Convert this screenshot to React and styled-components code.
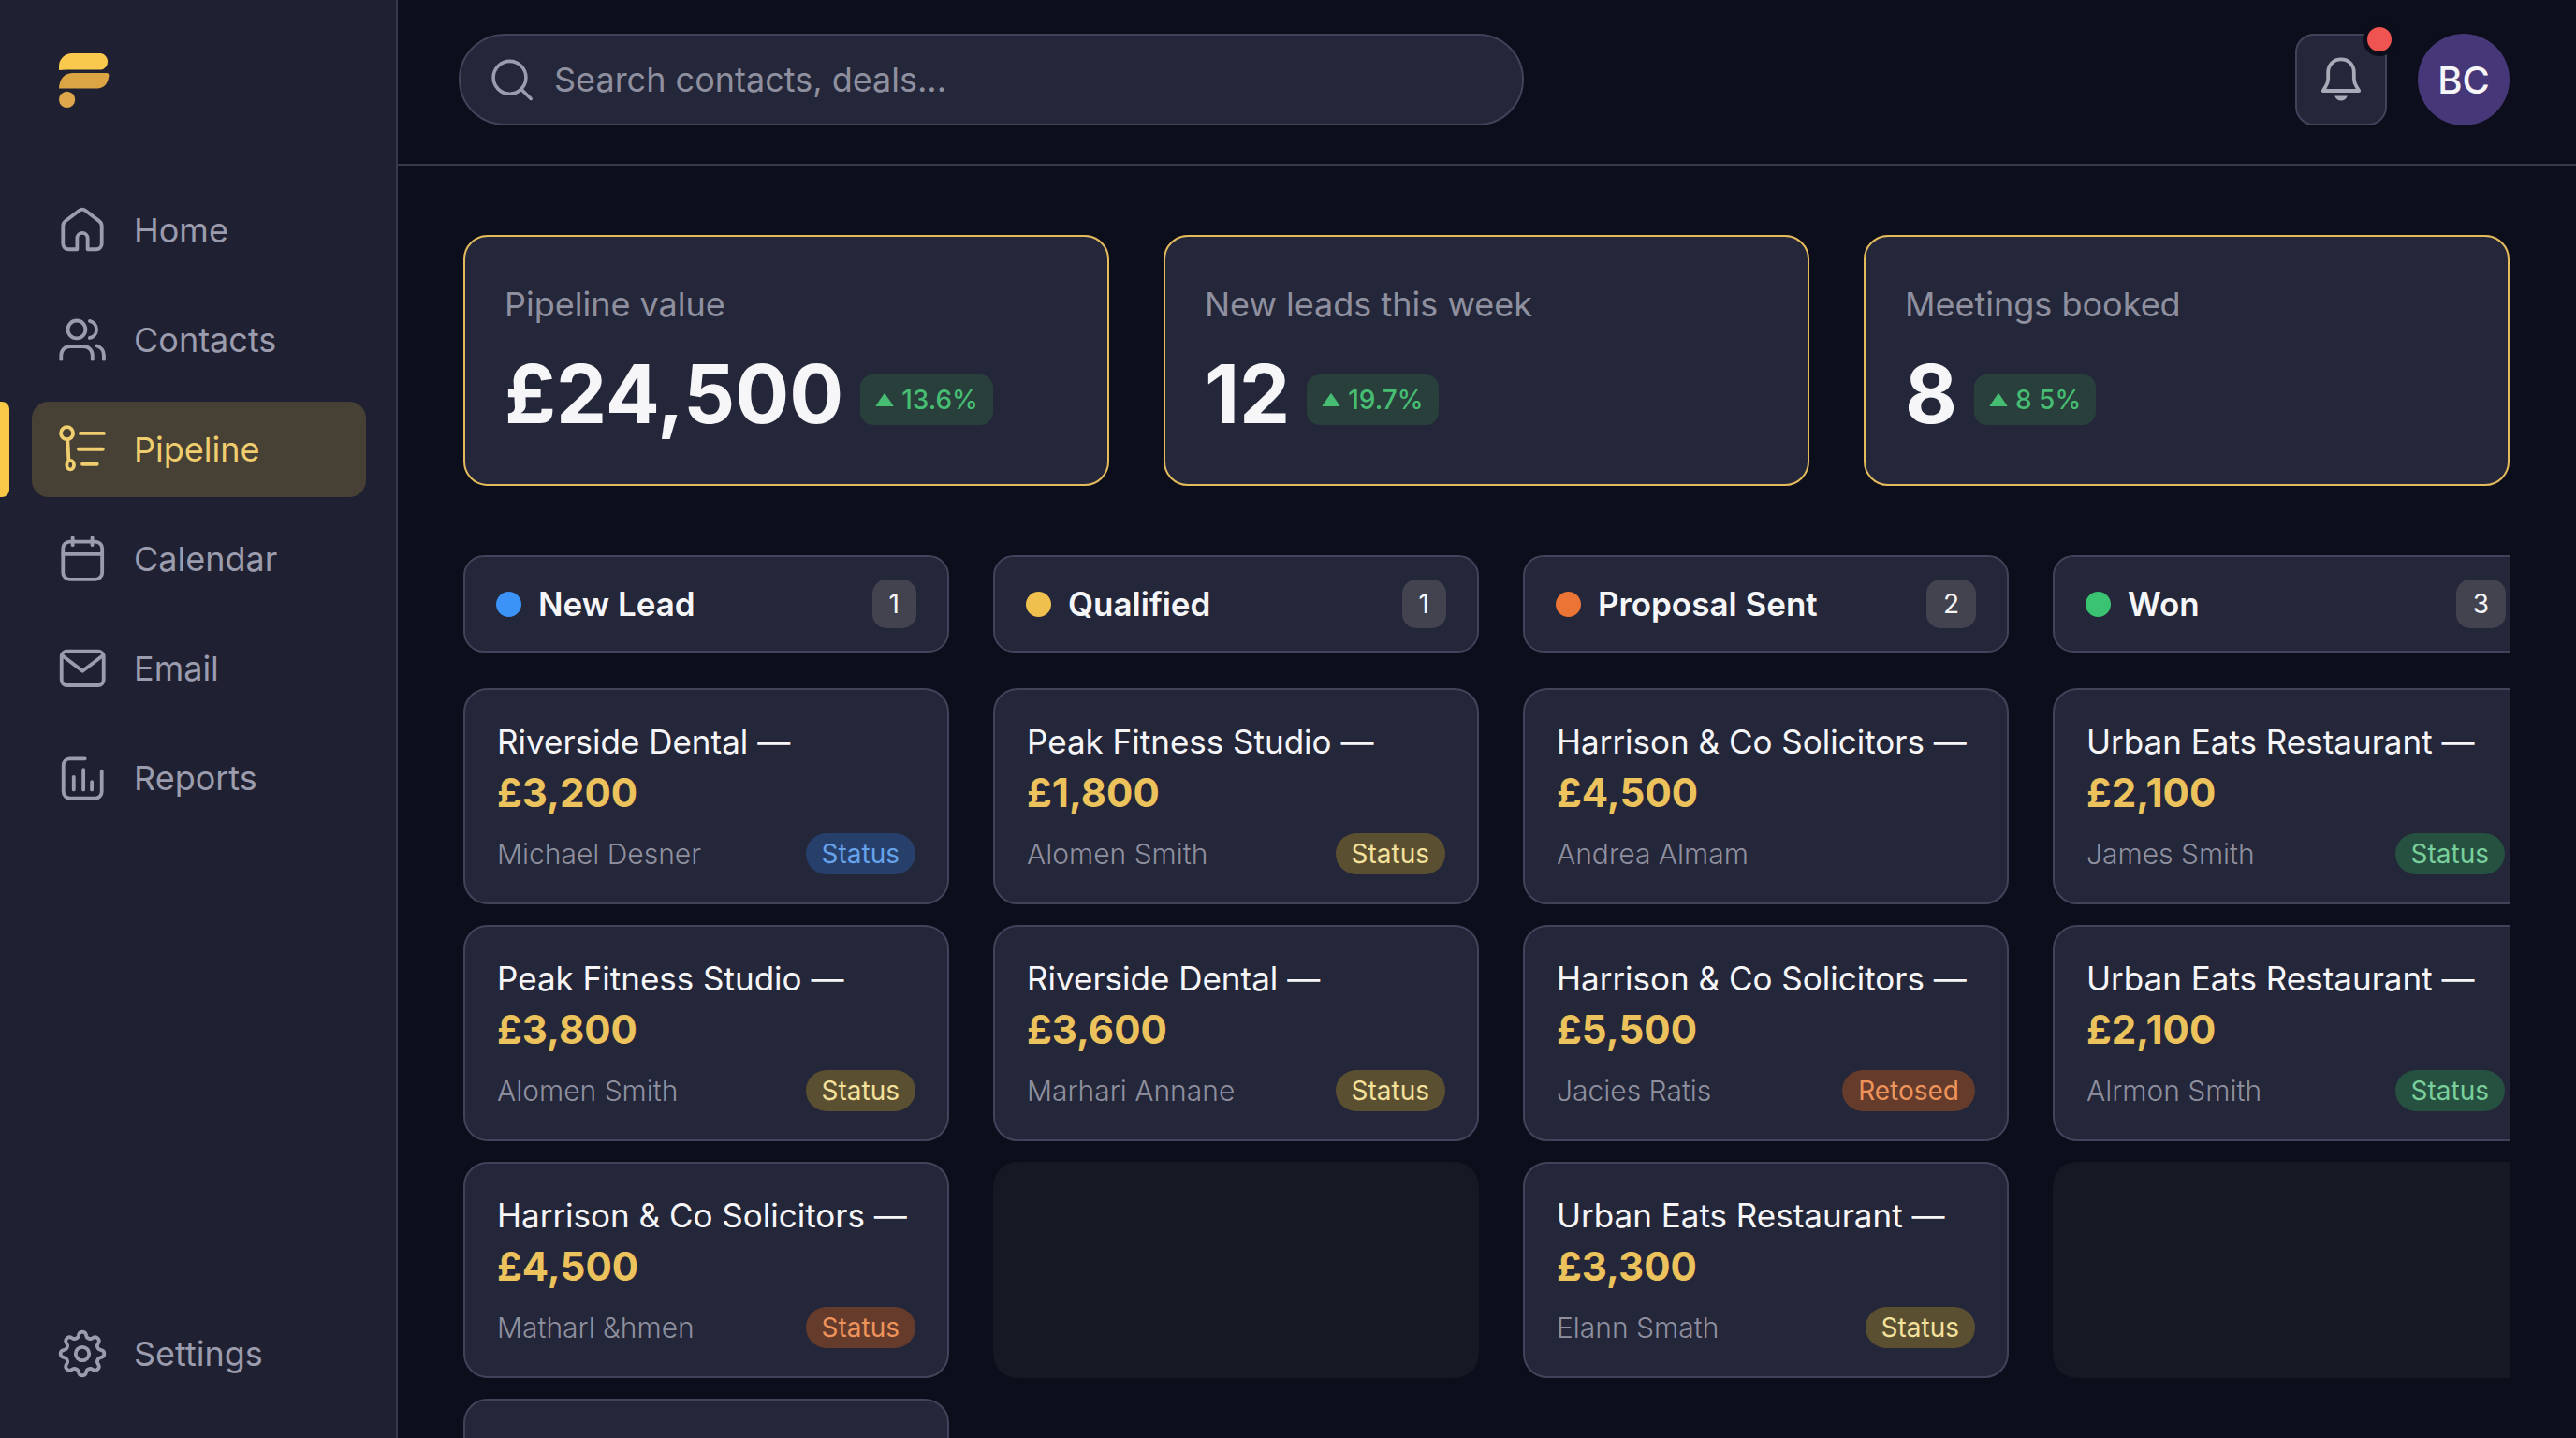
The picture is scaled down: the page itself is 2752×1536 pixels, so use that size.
import React from 'react';
import styled, { createGlobalStyle } from 'styled-components';

const GlobalStyle = createGlobalStyle`
  :root {
    --bg: #0d0e1b;
    --sidebar: #1f2031;
    --card: #242639;
    --card-empty: #161823;
    --border: #42435a;
    --white: #f6f6f8;
    --muted: #9b9cad;
    --muted-dark: #8f909f;
    --gold: #ecc25c;
    --green: #47bd73;
  }

  *,
  *::before,
  *::after {
    box-sizing: border-box;
  }

  body {
    margin: 0;
    background-color: var(--bg);
    color: var(--white);
    font-family: Inter, 'Liberation Sans', sans-serif;
    font-size: 36px;
  }

  h2,
  h3,
  p,
  ul {
    margin: 0;
    padding: 0;
    font-size: inherit;
    font-weight: inherit;
  }
`;

const Layout = styled.div`
  display: flex;
  height: 100vh;
  overflow: hidden;
`;

const Sidebar = styled.aside`
  display: flex;
  flex-direction: column;
  flex-shrink: 0;
  width: 425px;
  padding: 56px 32px 39px 34px;
  background-color: var(--sidebar);
  border-right: 2px solid #37384c;
`;

const LogoLink = styled.a`
  display: flex;
  margin: 0 0 79px 29px;
`;

const Nav = styled.nav`
  display: flex;
  flex-direction: column;
  flex-grow: 1;
  gap: 15px;
`;

const NavLink = styled.a`
  position: relative;
  display: flex;
  align-items: center;
  gap: 28px;
  height: 102px;
  padding: 0 27px;
  border-radius: 18px;
  color: ${({ $active }) => ($active ? '#f0cd6e' : 'var(--muted)')};
  background-color: ${({ $active }) => ($active ? '#474034' : 'transparent')};
  text-decoration: none;

  &:last-child {
    margin-top: auto;
  }

  &::before {
    content: '';
    display: ${({ $active }) => ($active ? 'block' : 'none')};
    position: absolute;
    top: 0;
    bottom: 0;
    left: -34px;
    width: 10px;
    border-radius: 0 8px 8px 0;
    background-color: #f9c846;
  }
`;

const Icon = styled.svg`
  flex-shrink: 0;
  width: 54px;
  height: 54px;
  fill: none;
  stroke: currentColor;
  stroke-width: 1.7;
  stroke-linecap: round;
  stroke-linejoin: round;
`;

const Main = styled.main`
  display: flex;
  flex-direction: column;
  flex-grow: 1;
  min-width: 0;
`;

const TopBar = styled.header`
  display: flex;
  align-items: center;
  flex-shrink: 0;
  gap: 33px;
  padding: 36px 71px 41px 65px;
  border-bottom: 2px solid #37384a;
`;

const Search = styled.label`
  display: flex;
  align-items: center;
  flex: 0 1 1138px;
  gap: 20px;
  height: 98px;
  margin-right: auto;
  padding: 0 32px;
  border: 2px solid var(--border);
  border-radius: 49px;
  background-color: var(--card);
  color: var(--muted);
`;

const SearchIcon = styled.svg`
  flex-shrink: 0;
  width: 48px;
  height: 48px;
  fill: none;
  stroke: currentColor;
  stroke-width: 3.6;
  stroke-linecap: round;
`;

const SearchInput = styled.input`
  flex-grow: 1;
  min-width: 0;
  padding: 0;
  border: 0;
  outline: none;
  background: transparent;
  color: var(--white);
  font: inherit;

  &::placeholder {
    color: var(--muted-dark);
    opacity: 1;
  }
`;

const BellButton = styled.button`
  position: relative;
  display: flex;
  align-items: center;
  justify-content: center;
  width: 98px;
  height: 98px;
  padding: 0;
  border: 2px solid var(--border);
  border-radius: 20px;
  background-color: var(--card);
  color: #a9aab8;
`;

const BellDot = styled.span`
  position: absolute;
  top: -14px;
  right: -12px;
  width: 36px;
  height: 36px;
  border: 5px solid var(--bg);
  border-radius: 50%;
  background-color: #f05450;
`;

const Avatar = styled.button`
  width: 98px;
  height: 98px;
  padding: 0;
  border: 0;
  border-radius: 50%;
  background-color: #463779;
  color: var(--white);
  font: inherit;
  font-size: 40px;
  font-weight: 500;
`;

const Content = styled.div`
  display: flex;
  flex-direction: column;
  flex-grow: 1;
  gap: 74px;
  min-height: 0;
  padding: 74px 71px 0 70px;
`;

const Stats = styled.section`
  display: grid;
  grid-template-columns: repeat(3, 1fr);
  gap: 58px;
`;

const StatCard = styled.article`
  padding: 50px 42px 42px;
  border: 2px solid #e3ba5c;
  border-radius: 26px;
  background-color: var(--card);
`;

const StatLabel = styled.h2`
  color: var(--muted-dark);
  line-height: 44px;
`;

const StatRow = styled.div`
  display: flex;
  align-items: center;
  gap: 18px;
  margin-top: 20px;
`;

const StatValue = styled.p`
  font-size: 86px;
  font-weight: 700;
  line-height: 108px;
`;

const Trend = styled.span`
  display: flex;
  align-items: center;
  gap: 8px;
  height: 54px;
  margin-top: 12px;
  padding: 0 16px;
  border-radius: 14px;
  background-color: #283f3c;
  color: var(--green);
  font-size: 28px;
  font-weight: 500;
`;

const Board = styled.section`
  display: flex;
  flex-grow: 1;
  gap: 47px;
  min-height: 0;
  overflow: hidden;
`;

const Column = styled.section`
  flex: 0 0 519px;
`;

const ColumnHeader = styled.header`
  display: flex;
  align-items: center;
  gap: 18px;
  height: 104px;
  margin-bottom: 38px;
  padding: 0 33px;
  border: 2px solid var(--border);
  border-radius: 22px;
  background-color: var(--card);
`;

const Dot = styled.span`
  width: 27px;
  height: 27px;
  border-radius: 50%;
  background-color: ${({ $color }) => $color};
`;

const ColumnTitle = styled.h2`
  flex-grow: 1;
  font-size: 35px;
  font-weight: 600;
`;

const Count = styled.span`
  padding: 0 18px;
  border-radius: 15px;
  background-color: #42434f;
  font-size: 28px;
  line-height: 52px;
`;

const DealList = styled.ul`
  display: flex;
  flex-direction: column;
  gap: 22px;
  list-style-type: none;
`;

const Deal = styled.li`
  height: 231px;
  padding: 27px 34px;
  border: 2px solid var(--border);
  border-radius: 26px;
  background-color: var(--card);
`;

const EmptySlot = styled.li`
  height: 231px;
  border-radius: 26px;
  background-color: var(--card-empty);
`;

const DealTitle = styled.h3`
  font-size: 35px;
  line-height: 56px;
  white-space: nowrap;
`;

const DealValue = styled.p`
  color: var(--gold);
  font-size: 42px;
  font-weight: 700;
  line-height: 54px;
`;

const DealFooter = styled.div`
  display: flex;
  align-items: center;
  justify-content: space-between;
  height: 44px;
  margin-top: 16px;
  color: var(--muted-dark);
  font-size: 30px;
  font-weight: 300;
`;

const tones = {
  blue: { background: '#273f6b', color: '#66a3ea' },
  yellow: { background: '#5b4f31', color: '#f3e19c' },
  orange: { background: '#653b2c', color: '#ee935a' },
  green: { background: '#265040', color: '#79cf9c' },
};

const Status = styled.span`
  padding: 0 17px;
  border-radius: 22px;
  background-color: ${({ $tone }) => tones[$tone].background};
  color: ${({ $tone }) => tones[$tone].color};
  font-size: 28px;
  font-weight: 400;
  line-height: 44px;
`;

// eight soft teeth around the settings icon
const gearPath = Array.from({ length: 144 }, (_, i) => {
  const angle = (i / 144) * Math.PI * 2;
  const radius = 9.1 + 1.35 * Math.tanh(1.6 * Math.cos(angle * 8));
  const x = 12 + radius * Math.sin(angle);
  const y = 12 - radius * Math.cos(angle);
  return `${i ? 'L' : 'M'}${x.toFixed(2)} ${y.toFixed(2)}`;
}).join('');

const icons = {
  home: (
    <path d="M9.5 21v-5.2a2.5 2.5 0 0 1 5 0V21h4.1a2.6 2.6 0 0 0 2.6-2.6V10a3 3 0 0 0-1.2-2.4l-6.6-5a2.3 2.3 0 0 0-2.8 0L4 7.6A3 3 0 0 0 2.8 10v8.4A2.6 2.6 0 0 0 5.4 21z" />
  ),
  contacts: (
    <>
      <circle cx="9.3" cy="7.1" r="4.2" />
      <path d="M15.5 3.1a4.1 4.1 0 0 1 0 8" />
      <path d="M1.9 21.2v-1.900a4.300 4.300 0 0 1 4.300-4.200h6.300a4.300 4.300 0 0 1 4.300 4.200v1.900" />
      <path d="M18.9 14.9a4.6 4.6 0 0 1 3.3 4.4v1.9" />
    </>
  ),
  pipeline: (
    <>
      <circle cx="4.7" cy="4.3" r="2.9" />
      <path d="M5 7.4l.5 9.5" />
      <ellipse cx="6.3" cy="19.4" rx="1.7" ry="2.1" />
      <path d="M11.1 4.4h11.1M10.2 11.9h11.5M12 19h7" />
    </>
  ),
  calendar: (
    <>
      <rect x="2.8" y="3.8" width="18.6" height="17.9" rx="3.2" />
      <path d="M2.8 9.7h18.6M7.4 1.8v3.6M16.7 1.8v3.6" />
    </>
  ),
  email: (
    <>
      <rect x="2.1" y="3.8" width="20" height="16.2" rx="2.6" />
      <path d="M2.8 6.1l9.3 7.1 9.3-7.1" />
    </>
  ),
  reports: (
    <>
      <path d="M13.2 2.8H6a3 3 0 0 0-3 3v12.8a3 3 0 0 0 3 3h12.200a3 3 0 0 0 3-3V8.900" />
      <path d="M7.9 11.5v6M12.5 8.100v9.400M16.500 13.800v3.700" />
    </>
  ),
  settings: (
    <>
      <path d={`${gearPath}z`} />
      <circle cx="12" cy="12" r="3.2" />
    </>
  ),
};

const navItems = [
  { id: 'home', label: 'Home' },
  { id: 'contacts', label: 'Contacts' },
  { id: 'pipeline', label: 'Pipeline' },
  { id: 'calendar', label: 'Calendar' },
  { id: 'email', label: 'Email' },
  { id: 'reports', label: 'Reports' },
  { id: 'settings', label: 'Settings' },
];

const stats = [
  { label: 'Pipeline value', value: '£24,500', trend: '13.6%' },
  { label: 'New leads this week', value: '12', trend: '19.7%' },
  { label: 'Meetings booked', value: '8', trend: '8 5%' },
];

const columns = [
  {
    title: 'New Lead',
    count: 1,
    color: '#3b93f7',
    deals: [
      { title: 'Riverside Dental —', value: '£3,200', person: 'Michael Desner', status: 'Status', tone: 'blue' },
      { title: 'Peak Fitness Studio —', value: '£3,800', person: 'Alomen Smith', status: 'Status', tone: 'yellow' },
      { title: 'Harrison & Co Solicitors —', value: '£4,500', person: 'Matharl &hmen', status: 'Status', tone: 'orange' },
      { title: 'Urban Eats Restaurant —', value: '£3,300', person: 'James Smith', status: 'Status', tone: 'blue' },
    ],
  },
  {
    title: 'Qualified',
    count: 1,
    color: '#f0c04e',
    deals: [
      { title: 'Peak Fitness Studio —', value: '£1,800', person: 'Alomen Smith', status: 'Status', tone: 'yellow' },
      { title: 'Riverside Dental —', value: '£3,600', person: 'Marhari Annane', status: 'Status', tone: 'yellow' },
      null,
    ],
  },
  {
    title: 'Proposal Sent',
    count: 2,
    color: '#ec7536',
    deals: [
      { title: 'Harrison & Co Solicitors —', value: '£4,500', person: 'Andrea Almam' },
      { title: 'Harrison & Co Solicitors —', value: '£5,500', person: 'Jacies Ratis', status: 'Retosed', tone: 'orange' },
      { title: 'Urban Eats Restaurant —', value: '£3,300', person: 'Elann Smath', status: 'Status', tone: 'yellow' },
    ],
  },
  {
    title: 'Won',
    count: 3,
    color: '#3ac371',
    deals: [
      { title: 'Urban Eats Restaurant —', value: '£2,100', person: 'James Smith', status: 'Status', tone: 'green' },
      { title: 'Urban Eats Restaurant —', value: '£2,100', person: 'Alrmon Smith', status: 'Status', tone: 'green' },
      null,
    ],
  },
];

const Logo = () => (
  <svg width="54" height="60" viewBox="0 0 54 60" aria-hidden="true">
    <path d="M0 19V15A14 14 0 0 1 14 1H45a9 9 0 0 1 0 17.6H8Q3 18.6 0 19z" fill="#f9c94d" />
    <path d="M0 38.6Q.6 22 16 22H51q2.4 0 2.4 2.4Q52 38.6 39 38.6z" fill="#dca544" />
    <circle cx="8.6" cy="50.4" r="8.6" fill="#dfa74c" />
  </svg>
);

const DealCard = ({ title, value, person, status, tone }) => (
  <Deal>
    <DealTitle>{title}</DealTitle>
    <DealValue>{value}</DealValue>
    <DealFooter>
      <span>{person}</span>
      {status && <Status $tone={tone}>{status}</Status>}
    </DealFooter>
  </Deal>
);

const App = () => (
  <>
    <GlobalStyle />
    <Layout>
      <Sidebar>
        <LogoLink href="#home" aria-label="Home">
          <Logo />
        </LogoLink>
        <Nav>
          {navItems.map(({ id, label }) => (
            <NavLink key={id} href={`#${id}`} $active={id === 'pipeline'}>
              <Icon viewBox="0 0 24 24">{icons[id]}</Icon>
              {label}
            </NavLink>
          ))}
        </Nav>
      </Sidebar>

      <Main>
        <TopBar>
          <Search>
            <SearchIcon viewBox="0 0 48 48">
              <circle cx="20.5" cy="21.8" r="17.4" />
              <path d="M33 34.4l10.2 10.2" />
            </SearchIcon>
            <SearchInput type="search" aria-label="Search" placeholder="Search contacts, deals..." />
          </Search>
          <BellButton type="button" aria-label="Notifications">
            <svg width="54" height="54" viewBox="0 0 54 54" fill="none">
              <path
                d="M27 5.4c-8 0-13.8 5.8-13.8 13.8v6.6c0 4-1.2 6.6-3 9.2l-2.4 4h38.4l-2.4-4c-1.8-2.6-3-5.2-3-9.2v-6.6C40.8 11.2 35 5.4 27 5.4z"
                stroke="currentColor"
                strokeWidth="3.8"
                strokeLinejoin="round"
              />
              <path d="M20.2 44.6h13.6q-2 5-6.8 5t-6.8-5z" fill="currentColor" />
            </svg>
            <BellDot />
          </BellButton>
          <Avatar type="button">BC</Avatar>
        </TopBar>

        <Content>
          <Stats>
            {stats.map(({ label, value, trend }) => (
              <StatCard key={label}>
                <StatLabel>{label}</StatLabel>
                <StatRow>
                  <StatValue>{value}</StatValue>
                  <Trend>
                    <svg width="20" height="16" viewBox="0 0 20 16" aria-hidden="true">
                      <path d="M10 1.5L19 14.5H1z" fill="currentColor" stroke="currentColor" strokeLinejoin="round" />
                    </svg>
                    {trend}
                  </Trend>
                </StatRow>
              </StatCard>
            ))}
          </Stats>

          <Board>
            {columns.map(({ title, count, color, deals }) => (
              <Column key={title}>
                <ColumnHeader>
                  <Dot $color={color} />
                  <ColumnTitle>{title}</ColumnTitle>
                  <Count>{count}</Count>
                </ColumnHeader>
                <DealList>
                  {deals.map((deal, i) => (deal ? <DealCard key={i} {...deal} /> : <EmptySlot key={i} />))}
                </DealList>
              </Column>
            ))}
          </Board>
        </Content>
      </Main>
    </Layout>
  </>
);

export default App;
